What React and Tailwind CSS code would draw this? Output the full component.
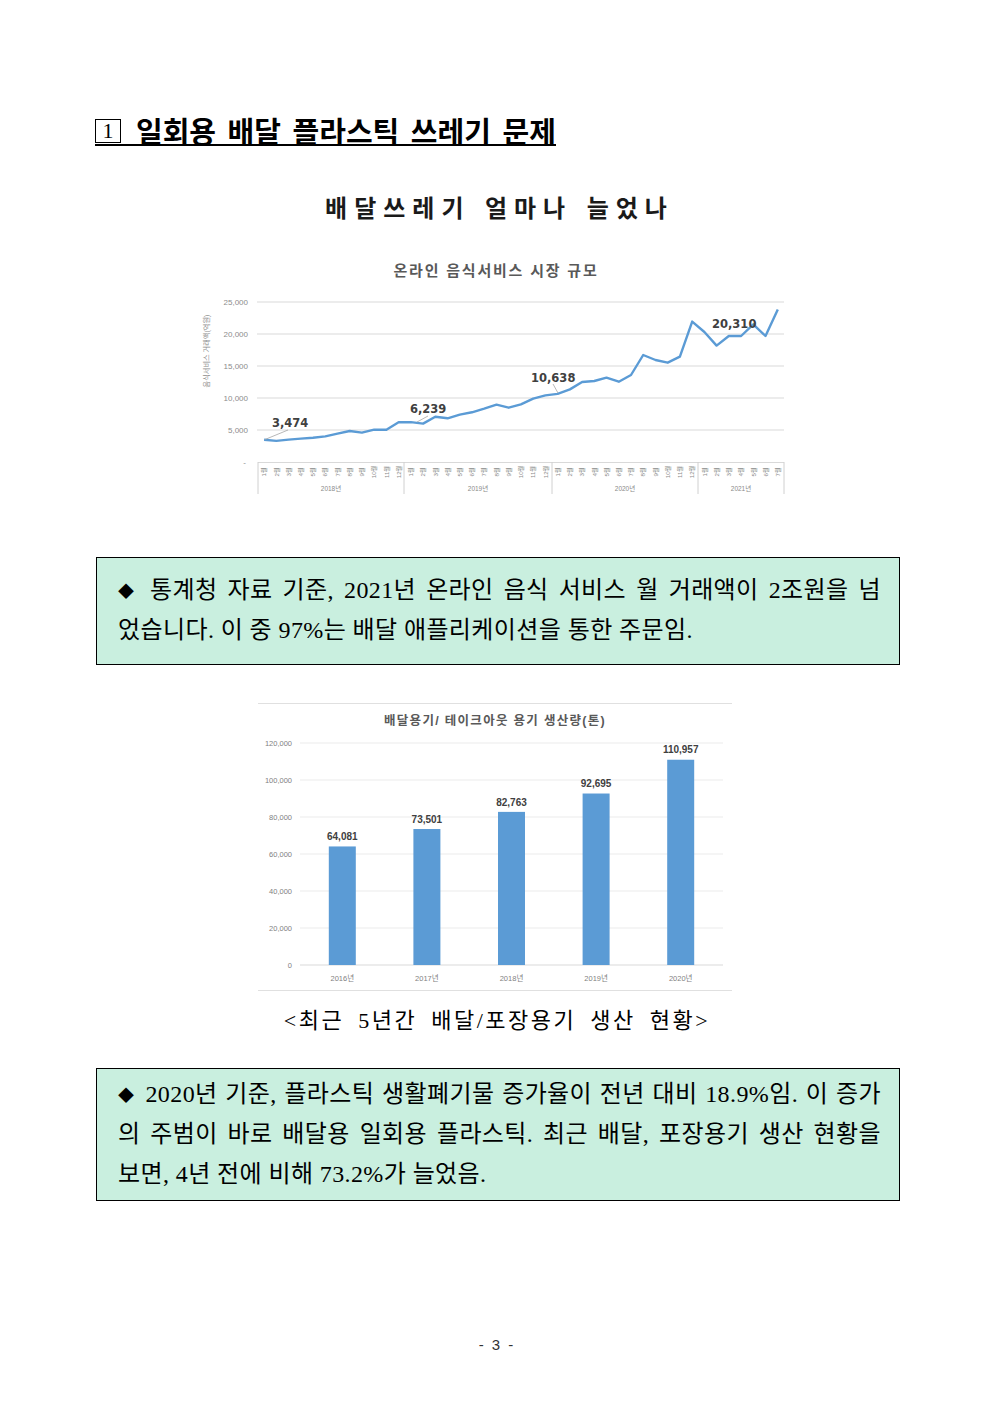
import React from 'react';

// monthly values (억원), 2018.1 ~ 2021.7
const sales = [
  3474, 3300, 3500, 3650, 3800, 4000, 4430, 4840, 4590, 5050, 5050, 6200,
  6239, 6000, 7080, 6830, 7400, 7760, 8330, 8960, 8490, 9010, 9900, 10400,
  10638, 11350, 12500, 12660, 13180, 12550, 13590, 16720, 15940, 15520, 16460, 21930,
  20310, 18180, 19690, 19690, 21510, 19690, 23850,
];

const containers = [
  ['2016년', 64081],
  ['2017년', 73501],
  ['2018년', 82763],
  ['2019년', 92695],
  ['2020년', 110957],
];

const sansKr = 'Liberation Sans, Noto Sans CJK KR, sans-serif';
const labelFont = 'DejaVu Sans, Noto Sans CJK KR, sans-serif';

const LineChart = () => {
  const px = (i) => 264.1 + 12.23 * i;
  const py = (v) => 462 - v * 0.0064;
  const points = sales.map((v, i) => `${px(i).toFixed(1)},${py(v).toFixed(1)}`).join(' ');
  const ticks = [25000, 20000, 15000, 10000, 5000];
  const months = sales.map((_, i) => `${(i % 12) + 1}월`);
  const years = [
    ['2018년', 331],
    ['2019년', 478],
    ['2020년', 625],
    ['2021년', 741],
  ];

  return (
    <svg width="610" height="245" viewBox="190 255 610 245" className="ml-[190px] mt-[33px] block">
      <text x="496" y="275.5" textAnchor="middle" fontFamily={sansKr} fontSize="15" fontWeight="700" fill="#595959" letterSpacing="1.8">
        온라인 음식서비스 시장 규모
      </text>

      {/* grid */}
      {ticks.map((t) => (
        <g key={t}>
          <line x1="257" x2="784" y1={py(t)} y2={py(t)} stroke="#d9d9d9" strokeWidth="1" />
          <text x="248" y={py(t) + 2.8} textAnchor="end" fontFamily={sansKr} fontSize="8" fill="#8c8c8c">
            {t.toLocaleString('en-US')}
          </text>
        </g>
      ))}
      <text x="246" y="465" textAnchor="end" fontFamily={sansKr} fontSize="8" fill="#8c8c8c">-</text>
      <text transform="translate(208.5,351) rotate(-90)" textAnchor="middle" fontFamily={sansKr} fontSize="7.2" fill="#8c8c8c">
        음식서비스 거래액(억원)
      </text>

      {/* category axis */}
      <line x1="258" x2="784" y1="462.5" y2="462.5" stroke="#d9d9d9" strokeWidth="1" />
      {[258, 404, 552, 698, 784].map((x) => (
        <line key={x} x1={x} x2={x} y1="462" y2="494" stroke="#d0d0d0" strokeWidth="1" />
      ))}
      {months.map((m, i) => (
        <text key={i} transform={`translate(${px(i) + 2.2},472) rotate(-90)`} textAnchor="middle" fontFamily={sansKr} fontSize="6.2" fill="#8a8a8a">
          {m}
        </text>
      ))}
      {years.map(([y, x]) => (
        <text key={y} x={x} y="491" textAnchor="middle" fontFamily={sansKr} fontSize="6.5" fill="#8a8a8a">
          {y}
        </text>
      ))}

      <polyline points={points} fill="none" stroke="#5b9bd5" strokeWidth="2.4" strokeLinejoin="round" />

      {/* data labels */}
      <line x1="265" y1="439.5" x2="288" y2="430" stroke="#a6a6a6" strokeWidth="0.8" />
      <text x="272" y="426.5" fontFamily={labelFont} fontSize="11.5" fontWeight="700" fill="#404040">3,474</text>
      <line x1="417" y1="422" x2="428" y2="416" stroke="#a6a6a6" strokeWidth="0.8" />
      <text x="410" y="413" fontFamily={labelFont} fontSize="11.5" fontWeight="700" fill="#404040">6,239</text>
      <line x1="553" y1="384" x2="558" y2="393" stroke="#a6a6a6" strokeWidth="0.8" />
      <text x="531" y="382" fontFamily={labelFont} fontSize="11.5" fontWeight="700" fill="#404040">10,638</text>
      <text x="712" y="327.5" fontFamily={labelFont} fontSize="11.5" fontWeight="700" fill="#404040">20,310</text>
    </svg>
  );
};

const BarChart = () => {
  const py = (v) => 965 - (v * 222) / 120000;
  const ticks = [120000, 100000, 80000, 60000, 40000, 20000, 0];

  return (
    <svg width="480" height="295" viewBox="255 700 480 295" className="ml-[255px] mt-[35px] block">
      <line x1="258" x2="732" y1="703.5" y2="703.5" stroke="#e0e0e0" strokeWidth="1" />
      <line x1="258" x2="732" y1="990.5" y2="990.5" stroke="#e0e0e0" strokeWidth="1" />
      <text x="495" y="724.5" textAnchor="middle" fontFamily={sansKr} fontSize="12.5" fontWeight="700" fill="#595959" letterSpacing="1.3">
        배달용기/ 테이크아웃 용기 생산량(톤)
      </text>

      {ticks.map((t) => (
        <g key={t}>
          <line x1="300" x2="723" y1={py(t)} y2={py(t)} stroke={t === 0 ? '#d9d9d9' : '#ebebeb'} strokeWidth="1" />
          <text x="292" y={py(t) + 2.6} textAnchor="end" fontFamily={sansKr} fontSize="7.5" fill="#7f7f7f">
            {t === 0 ? '0' : t.toLocaleString('en-US')}
          </text>
        </g>
      ))}

      {containers.map(([year, v], i) => {
        const cx = 342.3 + 84.6 * i;
        const top = py(v);
        return (
          <g key={year}>
            <rect x={cx - 13.5} y={top} width="27" height={965 - top} fill="#5b9bd5" />
            <text x={cx} y={top - 6.3} textAnchor="middle" fontFamily={sansKr} fontSize="10" fontWeight="700" fill="#404040">
              {v.toLocaleString('en-US')}
            </text>
            <text x={cx} y="980.5" textAnchor="middle" fontFamily={sansKr} fontSize="7.5" fill="#7f7f7f">
              {year}
            </text>
          </g>
        );
      })}
    </svg>
  );
};

const Diamond = () => <span className="mr-[2px] text-[16px] align-[1px]">◆</span>;

const NoteBox = ({ lines, className }) => (
  <div className={`ml-[96px] w-[804px] border border-black bg-[#c9efdf] pl-[21px] pr-[18px] font-['Liberation_Serif','Noto_Sans_CJK_KR',serif] text-[24px] leading-[40px] tracking-[0.4px] text-black ${className}`}>
    {lines.map((l, i) => (
      <div key={i} className={`h-[40px] overflow-visible ${i < lines.length - 1 ? 'text-justify [text-align-last:justify]' : 'text-left'}`}>
        {l}
      </div>
    ))}
  </div>
);

export default function App() {
  return (
    <div className="h-[1403px] w-[992px] overflow-hidden bg-white font-['Noto_Sans_CJK_KR',sans-serif] text-black">
      {/* section heading */}
      <div className="ml-[95px] mt-[116px] flex w-fit items-end border-b-2 border-black">
        <span className="mb-[1px] flex h-[24px] w-[26px] items-center justify-center border border-black font-['Liberation_Serif',serif] text-[22px] leading-none">
          1
        </span>
        <span className="ml-[15px] text-[29px] font-bold leading-[28px] [word-spacing:5px]">
          일회용 배달 플라스틱 쓰레기 문제
        </span>
      </div>

      <h2 className="mt-[46px] pl-[7px] text-center text-[24px] font-bold leading-[30px] tracking-[7px] [word-spacing:2px] text-[#1a1a1a]">
        배달쓰레기 얼마나 늘었나
      </h2>

      <LineChart />

      <NoteBox
        className="mt-[57px] h-[108px] pt-[12px]"
        lines={[
          <><Diamond /> 통계청 자료 기준, 2021년 온라인 음식 서비스 월 거래액이 2조원을 넘</>,
          '었습니다. 이 중 97%는 배달 애플리케이션을 통한 주문임.',
        ]}
      />

      <BarChart />

      <p className="mt-[11px] pl-[2px] text-center font-['Liberation_Serif','Noto_Sans_CJK_KR',serif] text-[22px] leading-[30px] tracking-[2.5px] [word-spacing:6px]">
        &lt;최근 5년간 배달/포장용기 생산 현황&gt;
      </p>

      <NoteBox
        className="mt-[32px] h-[133px] pt-[5px]"
        lines={[
          <><Diamond /> 2020년 기준, 플라스틱 생활폐기물 증가율이 전년 대비 18.9%임. 이 증가</>,
          '의 주범이 바로 배달용 일회용 플라스틱. 최근 배달, 포장용기 생산 현황을',
          '보면, 4년 전에 비해 73.2%가 늘었음.',
        ]}
      />

      <p className="mt-[134px] pl-[2px] text-center font-['Liberation_Sans',sans-serif] text-[15px] leading-[20px] tracking-[2px] text-[#333]">
        - 3 -
      </p>
    </div>
  );
}
